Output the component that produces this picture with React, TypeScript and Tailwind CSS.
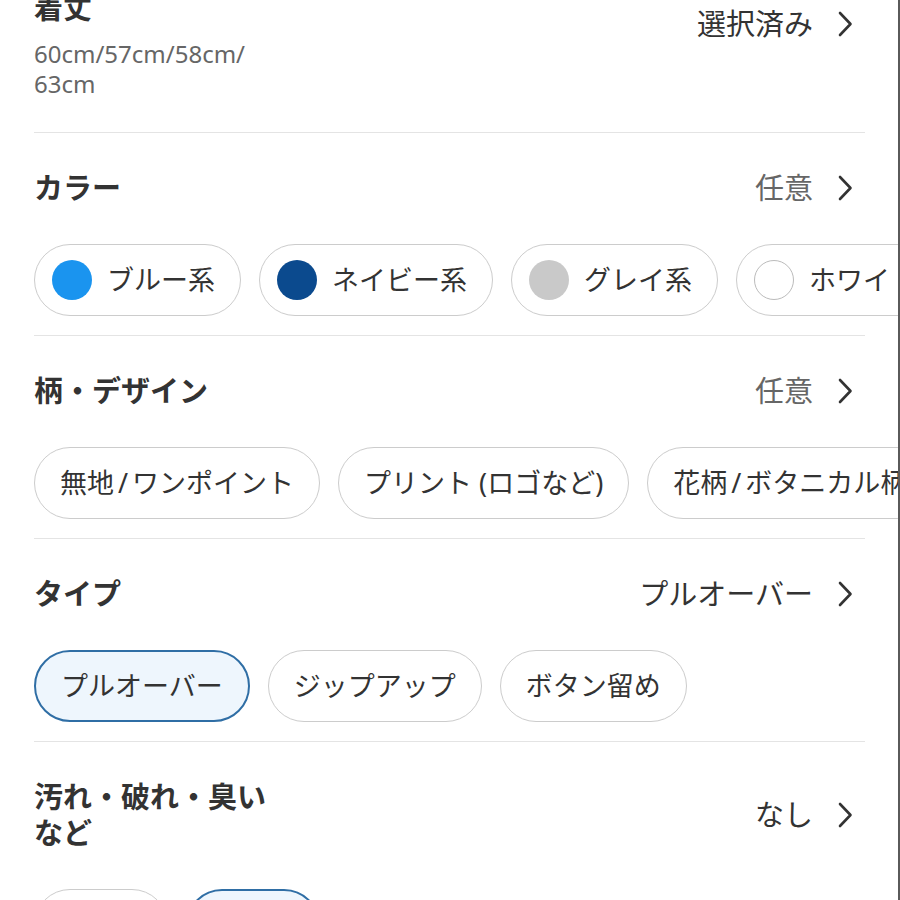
import React from "react";

const font = { fontFamily: '"Noto Sans", "Noto Sans CJK JP", sans-serif' };

function Chevron() {
  return (
    <svg
      width="16"
      height="26"
      viewBox="0 0 16 26"
      fill="none"
      stroke="#333333"
      strokeWidth="2.6"
      strokeLinecap="round"
      strokeLinejoin="round"
      className="ml-[24px] mr-[12px] shrink-0"
    >
      <path d="M3 2 L13.5 13 L3 24" />
    </svg>
  );
}

function RightLabel({ text, gray }: { text: string; gray?: boolean }) {
  return (
    <div className="flex items-center shrink-0">
      <span className={`text-[29px] leading-[36px] ${gray ? "text-[#666666]" : "text-[#333333]"}`}>{text}</span>
      <Chevron />
    </div>
  );
}

function Slash() {
  return <span className="mx-[4px]">/</span>;
}

function Chip({
  label,
  dot,
  selected,
  fixed,
}: {
  label: React.ReactNode;
  dot?: string;
  selected?: boolean;
  fixed?: boolean;
}) {
  return (
    <div
      className={`shrink-0 h-[72px] rounded-full flex items-center whitespace-nowrap ${
        selected ? "border-2 border-[#2f6ea5] bg-[#eef6fd]" : "border-[1.5px] border-[#cccccc] bg-white"
      } ${dot ? "pl-[17px] pr-[25px]" : "px-[25px]"} ${fixed ? "w-[134px] justify-center" : ""}`}
    >
      {dot && (
        <span
          className={`w-[40px] h-[40px] rounded-full mr-[15px] shrink-0 ${
            dot === "white" ? "border-[1.5px] border-[#bbbbbb] bg-white" : ""
          }`}
          style={dot !== "white" ? { backgroundColor: dot } : undefined}
        />
      )}
      <span className="text-[27px] leading-[36px] text-[#333333]">{label}</span>
    </div>
  );
}

function Section({
  title,
  right,
  gray,
  chips,
}: {
  title: React.ReactNode;
  right: string;
  gray?: boolean;
  chips: React.ReactNode;
}) {
  return (
    <div className="border-t border-[#e4e4e4] pt-[37px] pb-[19px]">
      <div className="flex items-center justify-between">
        <div className="text-[29px] leading-[36px] font-bold text-[#333333]">{title}</div>
        <RightLabel text={right} gray={gray} />
      </div>
      <div className="mt-[38px] flex gap-[18px] -mr-[40px]">{chips}</div>
    </div>
  );
}

export default function App() {
  return (
    <div className="w-[900px] h-[900px] overflow-hidden bg-white border-r-2 border-[#5a5a5a]" style={font}>
      <div className="pl-[34px] pr-[33px]">
        {/* 着丈 */}
        <div className="-mt-[10px] pb-[33px] flex items-start justify-between">
          <div>
            <div className="text-[29px] leading-[36px] font-bold text-[#333333]">着丈</div>
            <div className="mt-[13px] text-[24px] leading-[30px] text-[#666666]">
              60cm/57cm/58cm/
              <br />
              63cm
            </div>
          </div>
          <div className="mt-[16px]">
            <RightLabel text="選択済み" />
          </div>
        </div>

        <Section
          title="カラー"
          right="任意"
          gray
          chips={
            <>
              <Chip label="ブルー系" dot="#1a94ef" />
              <Chip label="ネイビー系" dot="#0b4a8e" />
              <Chip label="グレイ系" dot="#c9c9c9" />
              <Chip label="ホワイト系" dot="white" />
            </>
          }
        />

        <Section
          title="柄・デザイン"
          right="任意"
          gray
          chips={
            <>
              <Chip
                label={
                  <>
                    無地<Slash />ワンポイント
                  </>
                }
              />
              <Chip label="プリント (ロゴなど)" />
              <Chip
                label={
                  <>
                    花柄<Slash />ボタニカル柄
                  </>
                }
              />
            </>
          }
        />

        <Section
          title="タイプ"
          right="プルオーバー"
          chips={
            <>
              <Chip label="プルオーバー" selected />
              <Chip label="ジップアップ" />
              <Chip label="ボタン留め" />
            </>
          }
        />

        <Section
          title={
            <>
              汚れ・破れ・臭い
              <br />
              など
            </>
          }
          right="なし"
          chips={
            <>
              <Chip label="あり" fixed />
              <Chip label="なし" fixed selected />
            </>
          }
        />
      </div>
    </div>
  );
}
